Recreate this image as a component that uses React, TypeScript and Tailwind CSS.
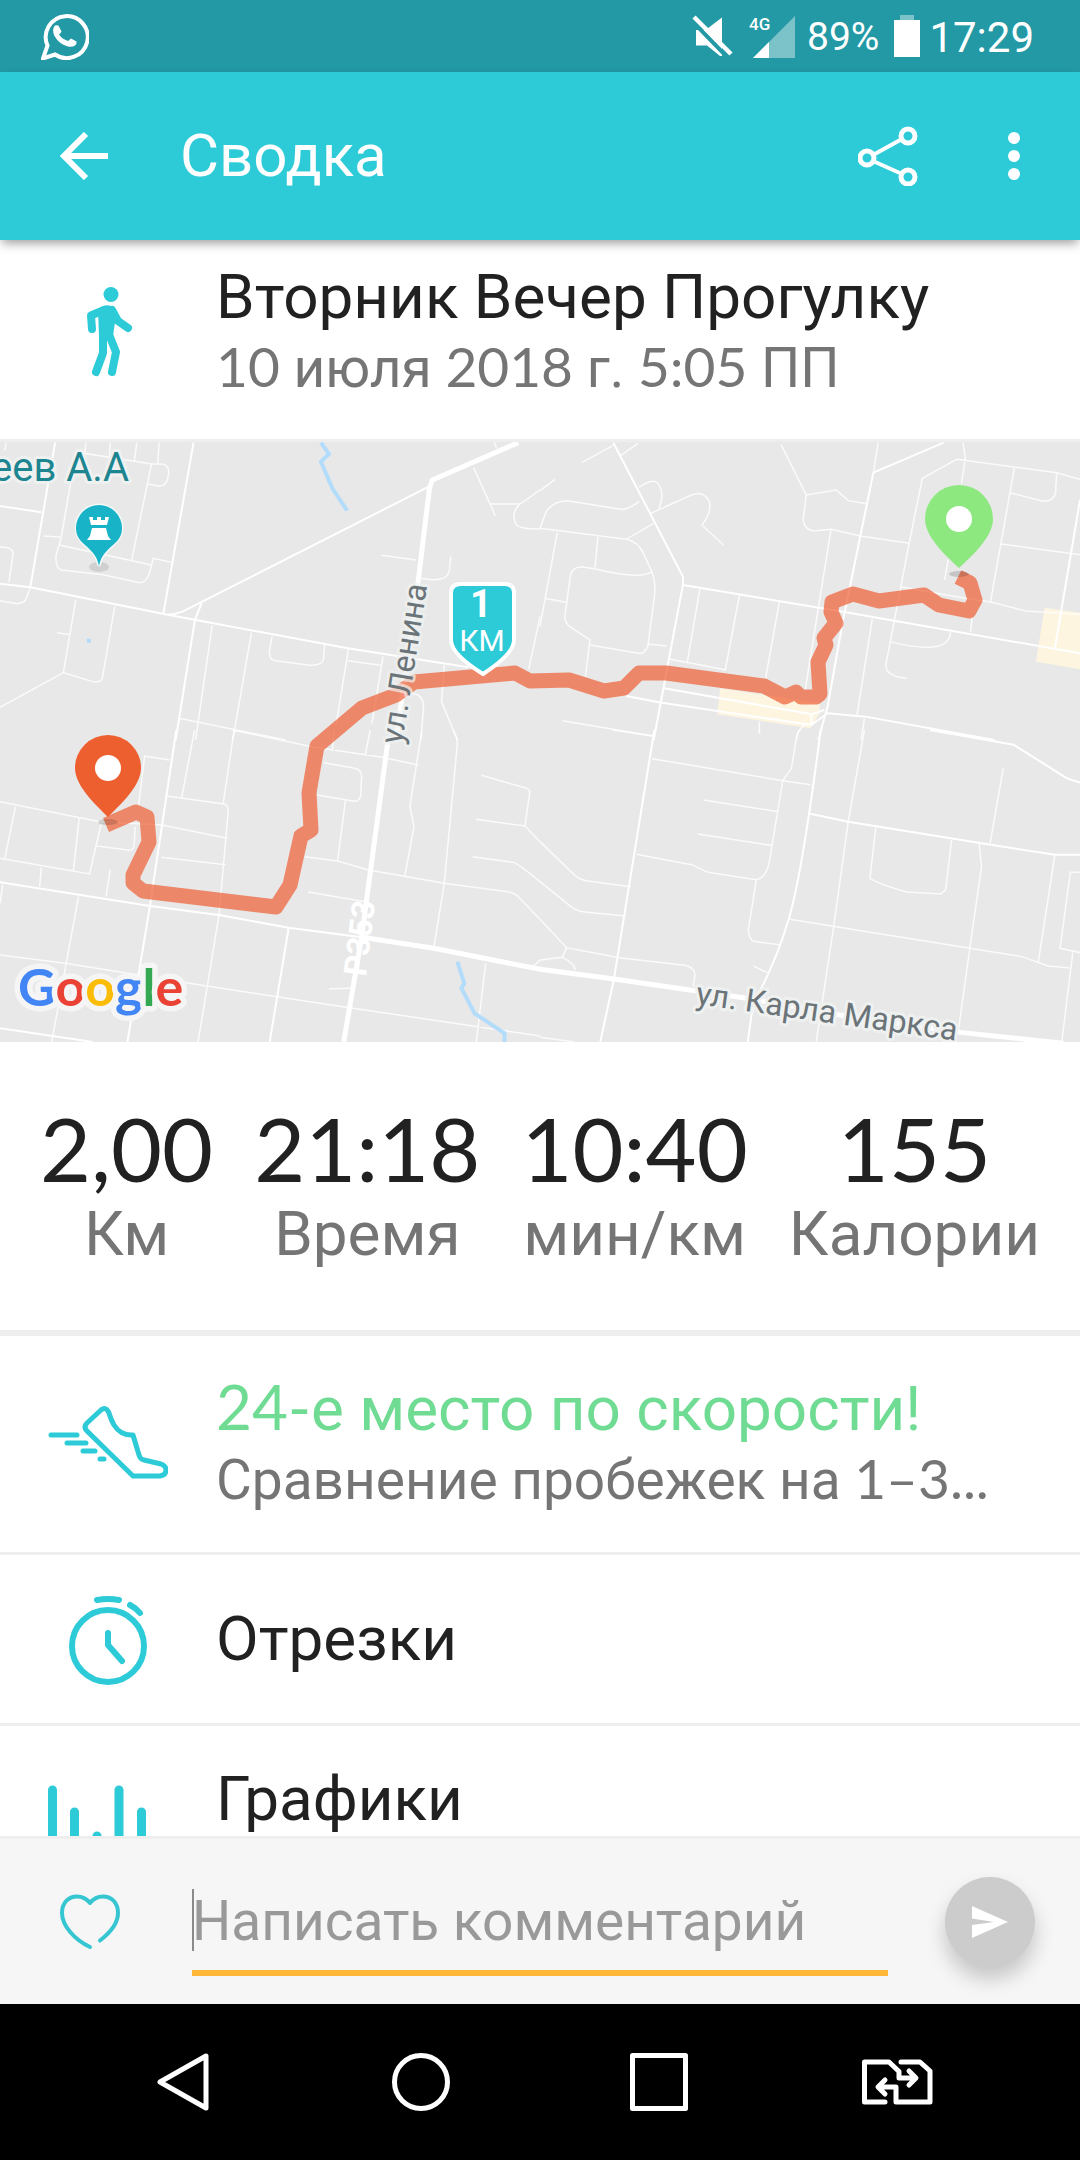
import { ReactNode } from 'react';

const stats = [
  { value: '2,00', label: 'Км' },
  { value: '21:18', label: 'Время' },
  { value: '10:40', label: 'мин/км' },
  { value: '155', label: 'Калории' },
];

// the map is drawn as four tiles, each one in its own units
const tiles = [
  {
    id: 'nw',
    transform: 'translate(0 430) scale(0.3444 0.3333)',
    minor:
      'M0 352Q38 350 38 372L26 455M14 62L18 38M250 38L245 70L440 102M320 38L318 80M397 38L390 95M462 38L458 102M440 102H470Q490 105 490 125Q488 168 462 168L428 162M440 102L382 392M205 160L178 320M128 318L178 322M172 345L440 405M178 322L163 375Q160 415 178 420L300 434L405 458Q430 460 440 405L445 385L495 396M0 512L50 521Q75 520 78 500L88 472M220 510L184 728L270 755Q295 760 298 740L333 530M165 608L205 614M184 728L0 832M616 586L568 930M730 608L676 930M790 620L782 665Q782 690 800 692L900 706Q940 708 940 680L943 640M1012 655L975 890M1112 680L1080 880M1010 692L1105 706M520 865L830 930M1290 705L1282 815L1328 930M1190 790Q1228 790 1230 830L1222 930M1375 112L1438 257M1422 222H1510L1568 180M1510 222Q1480 250 1500 285Q1510 297 1568 297M1108 376L1208 390M1222 445Q1300 460 1305 420L1309 380M1568 560L1535 718M1435 38L1442 55',
    medium:
      'M160 38L88 472M0 228L120 247M0 461L88 472L480 553L1010 655L1360 712M562 38L474 553M480 553Q505 555 530 545L1245 170M585 520L566 570L510 930',
    major: 'M1505 38L1255 150L1247 175L1210 490L1150 930',
    river: 'M932 38L955 72L932 95L965 175L1008 242M252 632H264',
    shops: '',
  },
  {
    id: 'ne',
    transform: 'translate(540 430) scale(0.3444 0.3333)',
    minor:
      'M0 182L44 148M122 97L213 46M235 76L285 40M0 295L18 245Q40 212 80 212L235 238Q250 242 288 215M288 172Q325 145 340 158Q365 185 345 235M322 250L440 195Q475 180 492 215Q498 250 470 285L533 345M0 295L250 328L330 280M250 328Q285 335 300 370L325 425Q338 460 332 500L313 650Q300 675 285 670L145 645M50 308L0 590M168 320L160 412M325 425Q290 450 165 418L120 410Q90 412 88 440L72 560Q72 580 90 592L145 630L132 740M14 505L75 517M313 642L368 648M372 686L540 720M464 478L428 695M579 496L538 720M695 516L655 745M700 44L773 195L860 180L895 212L953 222M773 195L764 270Q770 305 800 302L845 298L930 318L1072 340M845 298L770 780M982 38L968 128M1228 38L1235 85L1224 160M1110 145L1210 88L1500 128L1568 148M1110 145L1070 350L1005 700Q1000 740 1065 745M1500 128L1497 190Q1490 215 1460 214L1365 188M1378 110L1308 516M1340 342L1568 374M1045 470L1235 505L1308 516L1410 543L1568 553M1015 635Q1190 680 1192 605M965 565L920 860M1255 560L1250 606M1185 390L1175 450M942 865L932 930M637 875V910M65 872L330 918M770 885Q745 900 745 930',
    medium:
      'M213 38L415 440V465L330 930M415 465L880 545L1568 670M968 128L1172 38M968 128L880 570L835 830L808 930M1568 210L1495 655M360 775L790 853L825 840M250 798L345 817L788 885L835 850L945 860L1320 930M788 853V885',
    major: '',
    river: '',
    shops: 'M523 775L812 820V850L785 895L515 853ZM1465 533L1568 548V718L1440 695Z',
  },
  {
    id: 'sw',
    transform: 'translate(0 730) scale(0.3444 0.3333)',
    minor:
      'M0 215L290 275L470 285L660 325M45 230L14 385M230 262L213 425M0 385L260 432L293 285M120 412L115 470M320 420L308 500M282 348L375 361Q390 360 390 340L392 290M492 90L420 78L402 230M565 0L527 205M485 198L650 222Q662 225 663 240L636 555L575 936M680 0L648 220M675 0L905 50L1110 82L1215 105M970 0L965 65M1075 0L1060 78M940 98L1030 115Q1050 120 1050 140L1047 200Q1040 215 1030 214L920 195M1003 212L980 393M885 380L980 393L1070 420L1290 460L1475 485Q1490 488 1500 495L1568 568M1225 0L1190 230L1202 290L1175 440M1315 0Q1328 20 1328 40L1290 460L1260 650M468 382L655 404M8 465L0 520M228 500L150 936M0 675L190 700L600 768L1020 834L1568 918M895 486L1060 515M1398 136L1530 175Q1540 180 1538 190L1524 288L1382 268M1524 288L1568 335M1372 380L1490 397Q1500 398 1568 455M955 776L1020 775M1410 700L1383 936M1550 708L1568 690',
    medium:
      'M512 0L435 530L370 936M0 457L436 528L640 556L838 593L1050 622M838 595L783 936M0 895L270 936',
    major: 'M1128 20L1050 622L998 936M1050 622L1260 655L1568 718',
    river: 'M1328 695L1348 760L1340 775L1378 850L1465 910V936',
    shops: '',
  },
  {
    id: 'se',
    transform: 'translate(540 730) scale(0.3444 0.3333)',
    minor:
      'M210 0L325 18M325 86L705 152L785 164M637 0V10M755 0Q745 10 742 40L730 115L705 152L665 400Q655 445 628 449L488 427L440 404L280 373M628 449L605 600Q608 630 620 634L695 644M475 210L692 245M458 312L675 347M942 0L895 275L852 595L802 936M975 292L958 445Q990 465 1065 486L1165 492L1178 478L1195 330M1345 115L1307 340M1275 340L1282 410L1248 655L1215 900M725 568L1248 655L1400 680L1475 708L1538 714M1495 375L1447 695M1568 427H1540L1510 655L1568 668M1547 668L1515 936M0 335L100 435Q115 450 140 453L263 470M0 455L90 530Q105 543 130 546L248 558M0 568L77 653L230 683L420 706Q450 712 450 735L445 770M77 653L65 682L0 690M65 682Q100 700 103 720M620 708L660 728M0 922L100 936',
    medium:
      'M332 0L215 745L175 936M815 0Q760 440 722 568Q690 680 640 780L615 850L603 936M1132 0L1375 44L1530 145L1568 158M778 250L895 275L1300 343L1495 374H1568',
    major: 'M0 718L215 747L600 805L870 855L1200 905L1520 940',
    river: '',
    shops: '',
  },
];

const route =
  'M958 577L970 583L975 600L969 611L939 605L924 595L879 601L853 594L832 602L831 612L836 623L824 638L826 645L818 662L820 694L816 697L801 697L796 692L785 697L764 686L666 673L639 673L624 688L604 691L569 680L530 681L515 673L414 682L396 695L362 708L317 746L309 793L311 830L301 836L290 885L276 907L143 891L133 883L133 875L149 842L147 817L136 812L106 825';

function Num({ children }: { children: ReactNode }) {
  return <span className="font-['Lato'] leading-none">{children}</span>;
}

function StatusBar() {
  return (
    <div className="flex h-[72px] shrink-0 items-center bg-[#2399a6] pl-[41px] pr-[46px]">
      <svg viewBox="0 0 48 48" className="h-12 w-12" fill="none">
        <path
          d="M2 46.5L6.5 33.500A21 21 0 1 1 14 42.500Z"
          stroke="#fff"
          strokeWidth="4"
        />
        <path
          fill="#fff"
          d="M14 13.500Q17 12.500 18 14.500L20.500 19.500Q20 21 18 22.500Q21 27 27 29L30 26.500L35.500 29.500Q36 32 34 33.500Q31 35.500 27 34.500Q18 32 13.500 24Q10.500 17 14 13.500Z"
        />
      </svg>
      <svg viewBox="0 0 44 44" className="ml-auto h-11 w-11">
        <path fill="#fff" d="M5 16H14.500L31 3.500V42H29L16 31.500H5Z" />
        <path d="M0 6L37 44" stroke="#2399a6" strokeWidth="4" />
        <path d="M3 3L40 40" stroke="#fff" strokeWidth="4.500" />
      </svg>
      <svg viewBox="0 0 46 44" className="ml-3.5 h-11 w-[46px]">
        <path fill="#fff" fillOpacity="0.4" d="M4 44L46 2V44Z" />
        <path fill="#fff" d="M4 44L20 28V44Z" />
        <text
          x="0"
          y="16"
          fill="#fff"
          className="font-['Roboto'] text-[17px] font-medium"
        >
          4G
        </text>
      </svg>
      <span className="ml-3 pt-0.5 text-[39px] text-white">89%</span>
      <svg viewBox="0 0 28 44" className="ml-3.5 h-11 w-7" fill="#fff">
        <path fillOpacity="0.4" d="M7 1H21V6H7Z" />
        <path d="M1 6H27V43H1Z" />
      </svg>
      <span className="ml-2 pt-0.5 text-[42px] text-white">17:29</span>
    </div>
  );
}

function AppBar() {
  return (
    <header className="relative z-10 flex h-[168px] shrink-0 items-center bg-[#2dcad7] pl-[60px] pr-[42px] text-white shadow-[0_5px_10px_-2px_rgba(0,0,0,0.4)]">
      <button aria-label="Назад">
        <svg
          viewBox="0 0 48 48"
          className="h-12 w-12"
          fill="none"
          stroke="currentColor"
          strokeWidth="6"
        >
          <path d="M48 24H5M26 2L4 24L26 46" />
        </svg>
      </button>
      <h1 className="ml-[72px] flex-1 text-[60px]">Сводка</h1>
      <button aria-label="Поделиться">
        <svg
          viewBox="0 0 60 60"
          className="h-[60px] w-[60px]"
          fill="none"
          stroke="currentColor"
          strokeWidth="5"
        >
          <circle cx="9" cy="32" r="7" />
          <circle cx="50" cy="10" r="7" />
          <circle cx="50" cy="51" r="7" />
          <path strokeWidth="4" d="M15 29L44 13M15 35L44 48" />
        </svg>
      </button>
      <button aria-label="Ещё" className="ml-[72px]">
        <svg viewBox="0 0 48 60" className="h-[60px] w-12" fill="currentColor">
          <circle cx="24" cy="12" r="6" />
          <circle cx="24" cy="30" r="6" />
          <circle cx="24" cy="48" r="6" />
        </svg>
      </button>
    </header>
  );
}

function RouteMap() {
  return (
    <svg
      viewBox="0 442 1080 600"
      preserveAspectRatio="xMidYMid slice"
      className="h-[600px] w-full bg-[#e8e8e8]"
      fill="none"
    >
      {tiles.map((tile) => (
        <g key={tile.id} transform={tile.transform} stroke="#fff">
          <path d={tile.shops} fill="#fdf5e0" stroke="none" />
          <path
            d={tile.minor}
            strokeOpacity="0.8"
            strokeWidth="1.500"
            vectorEffect="non-scaling-stroke"
          />
          <path
            d={tile.river}
            stroke="#b3dcfb"
            strokeWidth="4"
            vectorEffect="non-scaling-stroke"
          />
          <path
            d={tile.medium}
            strokeWidth="2"
            vectorEffect="non-scaling-stroke"
          />
          <path
            d={tile.major}
            strokeWidth="5"
            vectorEffect="non-scaling-stroke"
          />
        </g>
      ))}

      <path
        d={route}
        stroke="#ef5e33"
        strokeOpacity="0.7"
        strokeWidth="15"
        strokeLinejoin="round"
      />

      <g
        className="font-['Roboto'] text-[32px]"
        fill="#6b7478"
        stroke="#eff1f1"
        strokeWidth="6"
        strokeLinejoin="round"
        paintOrder="stroke"
      >
        <text transform="translate(402 745) rotate(-81)" strokeOpacity="0.7">
          ул. Ленина
        </text>
        <text transform="translate(695 1004) rotate(8)">ул. Карла Маркса</text>
        <text
          transform="translate(366 977) rotate(-83)"
          fill="#fff"
          stroke="none"
          className="font-bold"
        >
          Р353
        </text>
        <text
          x="129"
          y="481"
          textAnchor="end"
          fill="#1c8590"
          className="text-[40px]"
        >
          еев А.А
        </text>
      </g>

      {/* landmark */}
      <ellipse cx="99" cy="567" rx="10" ry="5" fill="#000" fillOpacity="0.1" />
      <path
        d="M99 566C97 556 92 551 85 545C79 540 76 535 76 528A23 23 0 0 1 122 528C122 535 119 540 113 545C106 551 101 556 99 566Z"
        fill="#18b3c6"
        stroke="#f5f8f8"
        strokeWidth="3"
        paintOrder="stroke"
      />
      <path
        fill="#fff"
        d="M89 517H93V520H97V517H101V520H105V517H109L107 525H91ZM92 528H106L108 536L111 540H87L90 536Z"
      />

      {/* kilometre mark */}
      <path
        d="M461 584H505Q514 584 514 593V640Q514 654 483 674Q451 654 451 640V593Q451 584 461 584Z"
        fill="#2dcad7"
        stroke="#fff"
        strokeWidth="4"
      />
      <g fill="#fff" textAnchor="middle" className="font-['Roboto']">
        <text x="481" y="617" className="text-[38px] font-bold">
          1
        </text>
        <text x="482" y="651" className="text-[30px]">
          КМ
        </text>
      </g>

      {/* start and finish */}
      <ellipse cx="959" cy="574" rx="10" ry="3" fill="#000" fillOpacity="0.15" />
      <path
        fill="#8de97f"
        d="M959 568C946 556 925 537 925 519A34 34 0 0 1 993 519C993 537 972 556 959 568Z"
      />
      <circle cx="959" cy="519" r="13" fill="#fff" />
      <ellipse cx="108" cy="822" rx="10" ry="3" fill="#000" fillOpacity="0.15" />
      <path
        fill="#ee5f30"
        d="M108 817C96 805 75 786 75 768A33 33 0 0 1 141 768C141 786 120 805 108 817Z"
      />
      <circle cx="108" cy="768" r="13" fill="#fff" />

      <text
        x="18"
        y="1006"
        stroke="#f5f5f5"
        strokeWidth="11"
        strokeLinejoin="round"
        paintOrder="stroke"
        className="font-['Lato'] text-[52px] font-bold"
      >
        <tspan fill="#4285f4">G</tspan>
        <tspan fill="#ea4335">o</tspan>
        <tspan fill="#fbbc05">o</tspan>
        <tspan fill="#4285f4">g</tspan>
        <tspan fill="#34a853">l</tspan>
        <tspan fill="#ea4335">e</tspan>
      </text>
    </svg>
  );
}

function Row({ icon, children }: { icon: ReactNode; children: ReactNode }) {
  return (
    <button className="flex w-full items-center border-b-[3px] border-[#eeeeee] text-left">
      <span className="flex w-[216px] shrink-0 justify-center text-[#2dcad7]">
        {icon}
      </span>
      <span className="min-w-0 flex-1">{children}</span>
    </button>
  );
}

export default function App() {
  return (
    <div className="flex h-screen flex-col bg-white font-['Roboto',sans-serif] text-[#212121]">
      <StatusBar />
      <AppBar />

      <main className="min-h-0 flex-1 overflow-hidden">
        <section className="flex items-center border-b-[3px] border-[#eeeeee] pb-9 pt-[21px]">
          <div className="flex w-[216px] shrink-0 justify-center text-[#2dcad7]">
            <svg
              viewBox="0 0 72 96"
              className="h-24 w-[72px]"
              fill="none"
              stroke="currentColor"
              strokeWidth="8"
              strokeLinecap="round"
              strokeLinejoin="round"
            >
              <circle cx="39" cy="10.500" r="7.500" fill="currentColor" stroke="none" />
              <path
                fill="currentColor"
                stroke="none"
                d="M26 26Q35 17 43 25L47 33L43 38L41 52H27Z"
              />
              <path d="M32 26L19 31.500L20 45M40 26L46 37L56 44" />
              <path d="M31 46V69L24 88M36 48L44 68L40 88" />
            </svg>
          </div>
          <div>
            <h2 className="text-[62px] leading-[72px]">
              Вторник Вечер Прогулку
            </h2>
            <p className="text-[55px] leading-[70px] text-[#757575]">
              <Num>10</Num> июля <Num>2018</Num> г. <Num>5:05</Num> ПП
            </p>
          </div>
        </section>

        <RouteMap />

        <dl className="flex justify-between border-b-[6px] border-[#eeeeee] px-10 pb-[60px] pt-14 text-center">
          {stats.map((item) => (
            <div key={item.label} className="flex flex-col-reverse">
              <dt className="text-[62px] leading-[72px] text-[#757575]">
                {item.label}
              </dt>
              <dd className="font-['Lato'] text-[88px] leading-[100px]">
                {item.value}
              </dd>
            </div>
          ))}
        </dl>

        <Row
          icon={
            <svg
              viewBox="0 0 120 84"
              className="h-[84px] w-[120px]"
              fill="none"
              stroke="currentColor"
              strokeWidth="5"
              strokeLinecap="round"
              strokeLinejoin="round"
            >
              <path d="M3 33H29M19 41H38M35 49H47M52 57H56" />
              <path d="M53 8L39 21Q35 25 39 29L85 74H112Q118 73 118 68Q118 64 113 62L96 58Q92 57 91 53L85 33Q73 34 66 23Q63 18 61 11Q58 4 53 8Z" />
            </svg>
          }
        >
          <span className="block pt-[37px] text-[62px] leading-[72px] text-[#6fdb93]">
            <Num>24-</Num>е место по скорости!
          </span>
          <span className="block pb-[37px] text-[55px] leading-[70px] text-[#757575]">
            Сравнение пробежек на <Num>1–3...</Num>
          </span>
        </Row>

        <Row
          icon={
            <svg
              viewBox="0 0 96 96"
              className="h-24 w-24"
              fill="none"
              stroke="currentColor"
              strokeWidth="6"
              strokeLinecap="round"
              strokeLinejoin="round"
            >
              <circle cx="48" cy="55" r="36" />
              <path d="M37 9Q48 7 59 9M70 14Q76 17 80 22M48 42V54L62 70" />
            </svg>
          }
        >
          <span className="block py-12 text-[62px] leading-[72px]">
            Отрезки
          </span>
        </Row>

        <Row
          icon={
            <svg
              viewBox="0 0 120 104"
              className="h-[104px] w-[120px]"
              fill="none"
              stroke="currentColor"
              strokeWidth="9"
              strokeLinecap="round"
            >
              <path d="M4.500 8V100M26.500 30V100M49 54V100M71 8V100M93.500 30V100" />
            </svg>
          }
        >
          <span className="block pb-[107px] pt-[37px] text-[62px] leading-[72px]">
            Графики
          </span>
        </Row>
      </main>

      <form className="flex h-[168px] shrink-0 items-center border-t-[3px] border-[#eeeeee] bg-[#f6f6f6] pl-[60px] pr-[45px]">
        <button type="button" aria-label="Нравится" className="text-[#35c6d2]">
          <svg
            viewBox="0 0 60 56"
            className="h-14 w-[60px]"
            fill="none"
            stroke="currentColor"
            strokeWidth="4"
            strokeLinecap="round"
            strokeLinejoin="round"
          >
            <path d="M40 46.500C51 38 58 28 58 19C58 9 52 2.500 43 2.500C38 2.500 34 4 30 9C26 4 22 2.500 17 2.500C8 2.500 2 9 2 19C2 32 15 46 30 53" />
          </svg>
        </button>
        <label className="relative ml-[72px] mr-[57px] flex min-w-0 flex-1">
          <span className="absolute left-0 top-[22px] h-[62px] w-[2px] bg-[#8a8a8a]" />
          <input
            type="text"
            aria-label="Комментарий"
            placeholder="Написать комментарий"
            className="h-[109px] w-full border-b-[6px] border-[#feb737] pt-1 text-[55px] outline-none placeholder:text-[#999999]"
          />
        </label>
        <button
          type="submit"
          aria-label="Отправить"
          className="flex h-[90px] w-[90px] items-center justify-center rounded-full bg-[#cccccc] text-white shadow-[0_12px_20px_rgba(0,0,0,0.2)]"
        >
          <svg viewBox="0 0 36 32" className="h-8 w-9" fill="currentColor">
            <path d="M0 0L36 16L0 32V19L22 16L0 12.500Z" />
          </svg>
        </button>
      </form>

      <nav className="grid h-[156px] shrink-0 grid-cols-4 place-items-center bg-black px-16 text-white">
        <button aria-label="Назад (система)">
          <svg
            viewBox="0 0 60 60"
            className="h-[60px] w-[60px]"
            fill="none"
            stroke="currentColor"
            strokeWidth="5"
            strokeLinejoin="round"
          >
            <path d="M7 30L53 4V56Z" />
          </svg>
        </button>
        <button aria-label="Домой">
          <svg
            viewBox="0 0 60 60"
            className="h-[60px] w-[60px]"
            fill="none"
            stroke="currentColor"
            strokeWidth="5"
          >
            <circle cx="30" cy="30" r="26.500" />
          </svg>
        </button>
        <button aria-label="Недавние">
          <svg
            viewBox="0 0 60 60"
            className="h-[60px] w-[60px]"
            fill="none"
            stroke="currentColor"
            strokeWidth="5"
            strokeLinejoin="round"
          >
            <path d="M3.500 3.500H56.500V56.500H3.500Z" />
          </svg>
        </button>
        <button aria-label="Сменить SIM">
          <svg
            viewBox="0 0 72 48"
            className="h-12 w-[72px]"
            fill="none"
            stroke="currentColor"
            strokeWidth="5"
            strokeLinecap="round"
            strokeLinejoin="round"
          >
            <path d="M24 44H3.500V4H28L38 13.500V20H54M48 13L55 20L48 27" />
            <path d="M40 4H59L69 13V44H35V29H18M24 22L17 29L24 36" />
          </svg>
        </button>
      </nav>
    </div>
  );
}
